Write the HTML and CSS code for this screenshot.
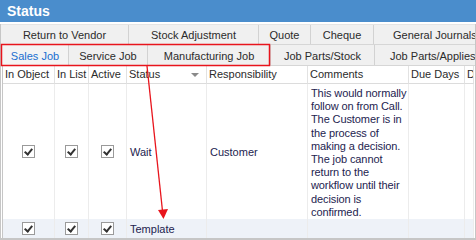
FILE: index.html
```html
<!DOCTYPE html>
<html>
<head>
<meta charset="utf-8">
<link rel="stylesheet" href="styles.css">
</head>
<body>
<div class="window">
  <div class="titlebar">Status</div>
  <div class="frame">
    <div class="tabrow row1">
      <div class="tab w-rtv">Return to Vendor</div>
      <div class="tab w-sa">Stock Adjustment</div>
      <div class="tab w-q">Quote</div>
      <div class="tab w-c">Cheque</div>
      <div class="tab w-gj">General Journals</div>
    </div>
    <div class="tabrow row2">
      <div class="tab w-sj active">Sales Job</div>
      <div class="tab w-svj">Service Job</div>
      <div class="tab w-mj">Manufacturing Job</div>
      <div class="tab w-jps">Job Parts/Stock</div>
      <div class="tab w-jpa">Job Parts/Applies</div>
    </div>
    <div class="grid">
      <div class="hd">In Object</div>
      <div class="hd">In List</div>
      <div class="hd">Active</div>
      <div class="hd hd-status">Status<span class="sortarrow"></span></div>
      <div class="hd">Responsibility</div>
      <div class="hd">Comments</div>
      <div class="hd">Due Days</div>
      <div class="hd">Du</div>

      <div class="cell center"><span class="cb"></span></div>
      <div class="cell center"><span class="cb"></span></div>
      <div class="cell center"><span class="cb"></span></div>
      <div class="cell mid">Wait</div>
      <div class="cell mid">Customer</div>
      <div class="cell comment">This would normally<br>follow on from Call.<br>The Customer is in<br>the process of<br>making a decision.<br>The job cannot<br>return to the<br>workflow until their<br>decision is<br>confirmed.</div>
      <div class="cell"></div>
      <div class="cell"></div>

      <div class="cell alt center"><span class="cb"></span></div>
      <div class="cell alt center"><span class="cb"></span></div>
      <div class="cell alt center"><span class="cb"></span></div>
      <div class="cell alt mid">Template</div>
      <div class="cell alt"></div>
      <div class="cell alt"></div>
      <div class="cell alt"></div>
      <div class="cell alt"></div>
    </div>
  </div>
  <svg class="annot" width="476" height="240" viewBox="0 0 476 240">
    <rect x="1.5" y="44.5" width="268" height="21" fill="none" stroke="#e8141c" stroke-width="1.5"/>
    <line x1="147" y1="66" x2="162.5" y2="211" stroke="#e8141c" stroke-width="1.3"/>
    <polygon points="158,210 168,209 163.5,219" fill="#e8141c"/>
  </svg>
</div>
</body>
</html>
```
FILE: styles.css
```css
html, body {
  margin: 0;
  padding: 0;
  background: #ffffff;
}
body {
  width: 476px;
  height: 240px;
  overflow: hidden;
  font-family: "Liberation Sans", Arial, sans-serif;
  font-size: 11px;
}
.window {
  position: relative;
  width: 476px;
  height: 240px;
  overflow: hidden;
}
.titlebar {
  height: 22px;
  background: #4a8dcc;
  color: #ffffff;
  font-weight: bold;
  font-size: 14px;
  line-height: 22px;
  padding-left: 7px;
  box-sizing: border-box;
}
.frame {
  margin-top: 2px;
  width: 474px;
  height: 214px;
  border-left: 1px solid #c6c6c6;
  border-right: 1px solid #c6c6c6;
  border-bottom: 2px solid #c6c6c6;
  background: #ffffff;
}
.tabrow {
  display: flex;
  background: #f0f0f0;
  border-bottom: 1px solid #d6d6d6;
  box-sizing: border-box;
}
.row1 { height: 21px; border-top: 1px solid #e4e4e4; }
.row2 { height: 21px; padding-left: 1px; }
.tab {
  display: flex;
  align-items: center;
  justify-content: center;
  color: #2b2b2b;
  border-right: 1px solid #d2d2d2;
  box-sizing: border-box;
  white-space: nowrap;
  overflow: hidden;
  font-size: 11px;
  padding-top: 1px;
}
.tab.active { color: #1b6fd0; background: #f4f4f4; }
.w-rtv { width: 128px; }
.w-sa { width: 130px; }
.w-q { width: 52px; }
.w-c { width: 63px; }
.w-gj { width: 101px; justify-content: flex-start; padding-left: 19px; border-right: none; }
.w-sj { width: 67px; }
.w-svj { width: 79px; }
.w-mj { width: 123px; }
.w-jps { width: 104px; }
.w-jpa { width: 100px; justify-content: flex-start; padding-left: 15px; border-right: none; }

.grid {
  display: grid;
  grid-template-columns: 52px 34px 38px 80px 101px 101px 56px 9px;
  grid-template-rows: 18px 135px 19px;
  margin-left: 1px;
  border-left: 1px solid #c6c6c6;
  font-size: 11px;
}
.hd {
  color: #2b2b2b;
  border-right: 1px solid #e2e2e2;
  border-bottom: 1px solid #dcdcdc;
  padding-left: 2px;
  line-height: 17px;
  white-space: nowrap;
  overflow: hidden;
  background: #ffffff;
}
.hd-status { position: relative; }
.sortarrow {
  position: absolute;
  right: 7px;
  top: 7px;
  width: 0;
  height: 0;
  border-left: 4px solid transparent;
  border-right: 4px solid transparent;
  border-top: 4px solid #8a8a8a;
}
.cell {
  color: #23234f;
  border-right: 1px solid #ececec;
  padding-left: 3px;
  box-sizing: border-box;
  overflow: hidden;
}
.cell.alt { background: #eef2f8; }
.center { display: flex; align-items: center; justify-content: center; padding-left: 0; }
.mid { display: flex; align-items: center; }
.comment { padding: 3px 0 0 3px; line-height: 13.2px; white-space: nowrap; letter-spacing: -0.1px; }
.cb {
  display: inline-block;
  width: 11px;
  height: 11px;
  border: 1px solid #9a9a9a;
  background: #ffffff;
  position: relative;
}
.cb::after {
  content: "";
  position: absolute;
  left: 3px;
  top: 1px;
  width: 3px;
  height: 6px;
  border-right: 2px solid #333333;
  border-bottom: 2px solid #333333;
  transform: rotate(40deg);
}
.annot {
  position: absolute;
  left: 0;
  top: 0;
  pointer-events: none;
}
```
